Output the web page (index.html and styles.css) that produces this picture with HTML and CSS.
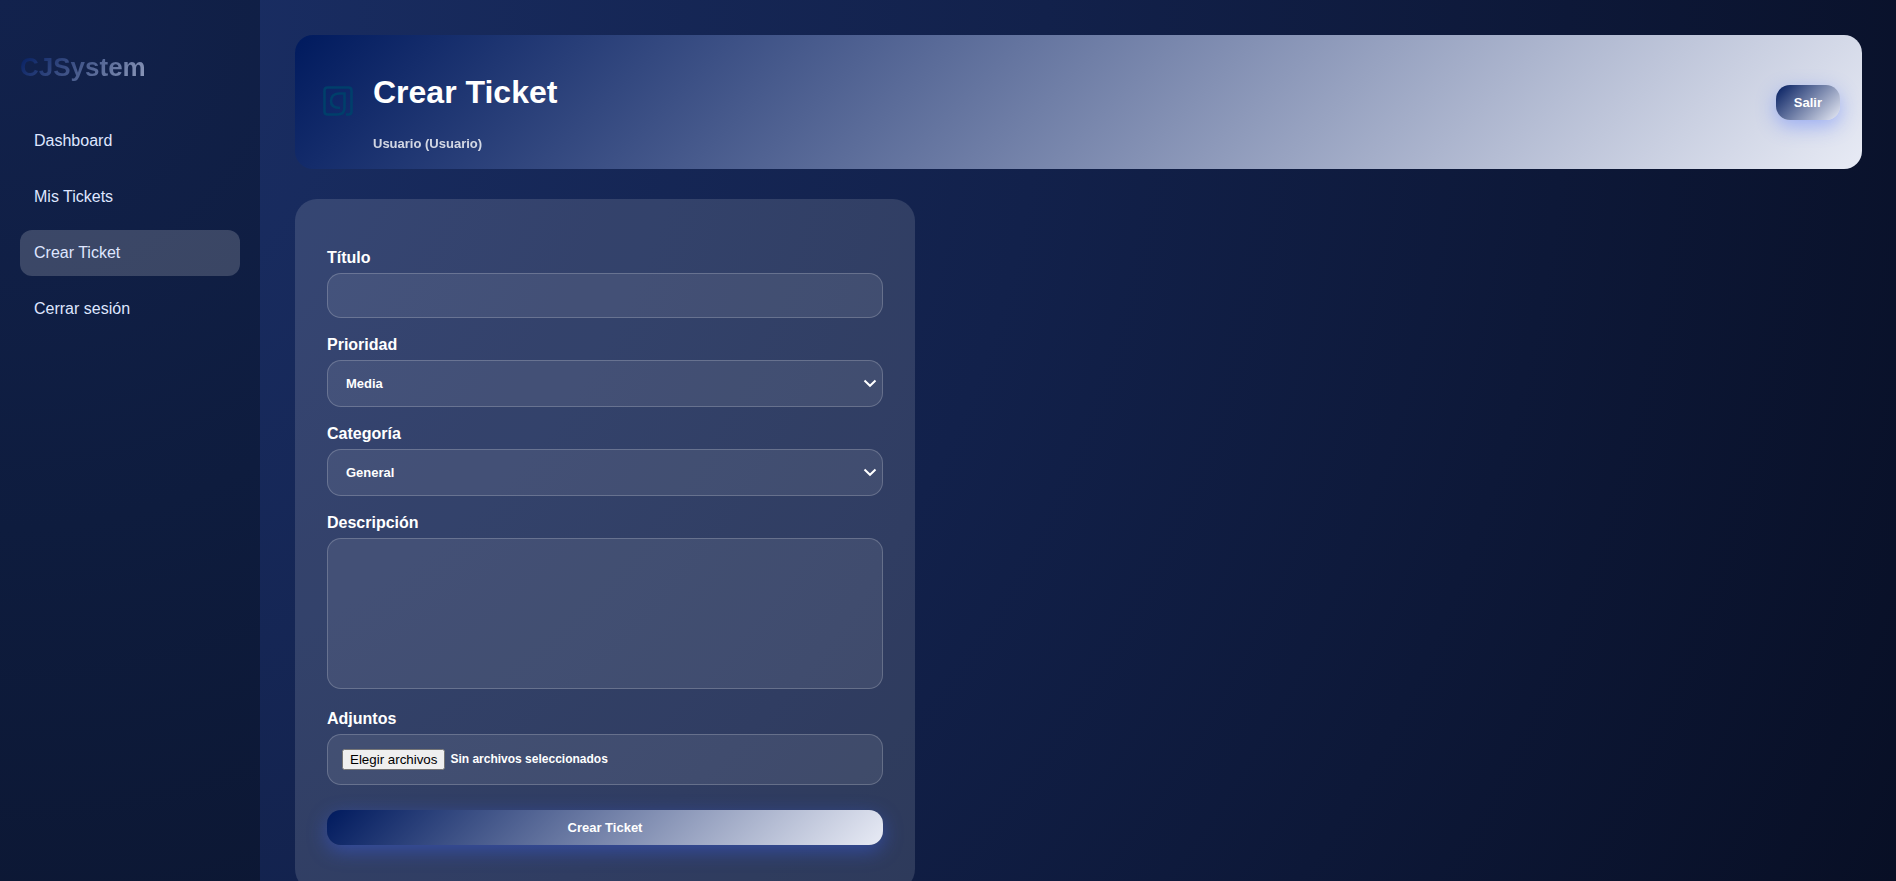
FILE: index.html
```
<!DOCTYPE html>
<html lang="es">
<head>
    <meta charset="UTF-8">
    <meta name="viewport" content="width=device-width, initial-scale=1.0">
    <title>Crear Ticket | CJSystem</title>
    <link rel="stylesheet" href="styles.css">
</head>
<body>
    <div class="layout">
        <aside class="sidebar">
            <h2 class="logo">CJSystem</h2>
            <nav class="menu">
                <a href="#">Dashboard</a>
                <a href="#">Mis Tickets</a>
                <a href="#" class="active">Crear Ticket</a>
                <a href="#">Cerrar sesión</a>
            </nav>
        </aside>

        <main class="main">
            <header class="topbar">
                <div class="topbar-left">
                    <svg class="brand-icon" viewBox="0 0 56 56" aria-hidden="true">
                        <path d="M36 40.500H38.500Q41.500 40.500 41.500 37.500V16.500Q41.500 13.500 38.500 13.500H17.500Q14.500 13.500 14.500 16.500V37.500Q14.500 40.500 17.500 40.500H27.500Q34.500 40.500 34.500 34V19.500H29Q21 20 21 27Q21 34 30 34"/>
                    </svg>
                    <div>
                        <h1>Crear Ticket</h1>
                        <p class="user">Usuario (Usuario)</p>
                    </div>
                </div>
                <button type="button" class="btn">Salir</button>
            </header>

            <form class="card">
                <label for="titulo">Título</label>
                <input type="text" id="titulo" class="field">

                <label for="prioridad">Prioridad</label>
                <select id="prioridad" class="field">
                    <option>Baja</option>
                    <option selected>Media</option>
                    <option>Alta</option>
                </select>

                <label for="categoria">Categoría</label>
                <select id="categoria" class="field">
                    <option>General</option>
                    <option>Hardware</option>
                    <option>Software</option>
                </select>

                <label for="descripcion">Descripción</label>
                <textarea id="descripcion" class="field"></textarea>

                <label for="adjuntos">Adjuntos</label>
                <div class="field file">
                    <input type="file" id="adjuntos" multiple hidden>
                    <button type="button" id="elegir">Elegir archivos</button>
                    <span id="archivos">Sin archivos seleccionados</span>
                </div>

                <button type="submit" class="btn btn-block">Crear Ticket</button>
            </form>
        </main>
    </div>

    <script>
        const adjuntos = document.getElementById('adjuntos');
        const archivos = document.getElementById('archivos');

        document.getElementById('elegir').addEventListener('click', () => adjuntos.click());

        adjuntos.addEventListener('change', () => {
            const n = adjuntos.files.length;
            archivos.textContent = n ? `${n} archivos` : 'Sin archivos seleccionados';
        });
    </script>
</body>
</html>
```
FILE: styles.css
```
* {
    box-sizing: border-box;
}

body {
    margin: 0;
    min-height: 100vh;
    font-family: "Liberation Sans", Arial, sans-serif;
    color: #fff;
    background: radial-gradient(circle at top left, #1b3068, #12214b 50%, #080f25) fixed;
}

.layout {
    display: flex;
    min-height: 100vh;
}

.sidebar {
    width: 260px;
    flex-shrink: 0;
    padding: 30px 20px;
    background: radial-gradient(circle at top left, #12224d, #0e1c3e 55%, #0c1733);
}

.logo {
    margin: 20px 0 34px;
    font-size: 26px;
    line-height: 34px;
    background: linear-gradient(135deg, #001a5e, #e8ebf5);
    background-clip: text;
    -webkit-background-clip: text;
    color: transparent;
}

.menu {
    display: flex;
    flex-direction: column;
    gap: 10px;
}

.menu a {
    padding: 14px;
    border-radius: 12px;
    font-size: 16px;
    line-height: 18px;
    color: #dfe6ff;
    text-decoration: none;
}

.menu a.active,
.menu a:hover {
    background: rgba(255, 255, 255, 0.18);
}

.main {
    flex: 1;
    min-width: 0;
    padding: 35px 34px 35px 35px;
}

.topbar {
    display: flex;
    align-items: center;
    justify-content: space-between;
    margin-bottom: 30px;
    padding: 18px 22px;
    border-radius: 18px;
    background: linear-gradient(135deg, #001a5e, #e8ebf5);
}

.topbar-left {
    display: flex;
    align-items: center;
}

.brand-icon {
    width: 56px;
    height: 56px;
    margin: 0 7px 0 -7px;
    fill: none;
    stroke: #003f6b;
    stroke-width: 2.6;
}

h1 {
    margin: 21px 0 25px;
    font-size: 32px;
    line-height: 37px;
}

.user {
    margin: 0;
    font-size: 13px;
    font-weight: 600;
    line-height: 15px;
    opacity: 0.8;
}

.btn {
    padding: 10px 18px;
    border: none;
    border-radius: 14px;
    font: bold 13px/15px "Liberation Sans", Arial, sans-serif;
    color: #fff;
    cursor: pointer;
    background: linear-gradient(135deg, #001a5e, #e8ebf5);
    box-shadow: 0 6px 20px rgba(60, 100, 255, 0.4);
}

.btn-block {
    display: block;
    width: 100%;
}

.card {
    max-width: 620px;
    padding: 49px 32px 46px;
    border-radius: 22px;
    background: rgba(255, 255, 255, 0.13);
}

label {
    display: block;
    margin-bottom: 5px;
    font-size: 16px;
    font-weight: bold;
    line-height: 20px;
}

.field {
    display: block;
    width: 100%;
    margin-bottom: 17px;
    padding: 14px;
    border: 1px solid rgba(255, 255, 255, 0.2);
    border-radius: 14px;
    font: bold 13px/15px "Liberation Sans", Arial, sans-serif;
    color: #fff;
    background-color: rgba(255, 255, 255, 0.08);
}

select.field {
    height: 47px;
    padding-left: 18px;
    appearance: none;
    background-image: url("data:image/svg+xml,%3Csvg xmlns='http://www.w3.org/2000/svg' viewBox='0 0 14 9'%3E%3Cpath d='M1.500 1.500L7 6.800L12.500 1.500' fill='none' stroke='white' stroke-width='2'/%3E%3C/svg%3E");
    background-repeat: no-repeat;
    background-position: right 5px center;
    background-size: 14px 9px;
}

select.field option {
    color: #12214b;
}

textarea.field {
    height: 151px;
    margin-bottom: 20px;
    resize: none;
}

.file {
    display: flex;
    align-items: center;
    gap: 5px;
    height: 51px;
    margin-bottom: 25px;
    font-size: 12px;
}
```
